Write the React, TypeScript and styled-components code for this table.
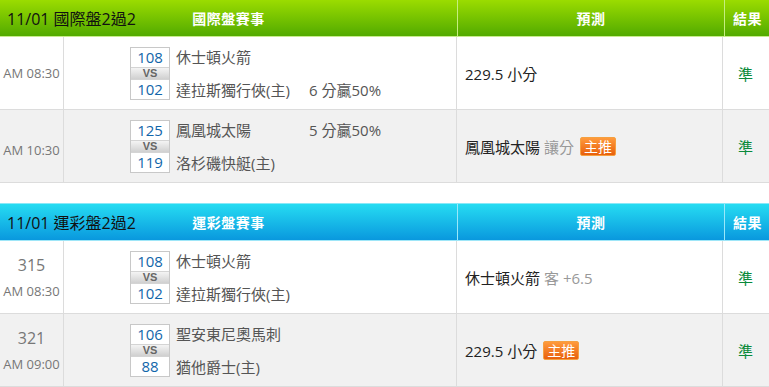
import React from 'react';
import styled, { createGlobalStyle } from 'styled-components';

const GlobalStyle = createGlobalStyle`
    body {
        margin: 0;
        background: #fff;
        font-family: 'Open Sans', 'Noto Sans CJK TC', sans-serif;
        overflow: hidden;
    }
`;

const Page = styled.div`
    width: 770px;
`;

const Section = styled.div`
    margin-bottom: 20px;
    &:last-child {
        margin-bottom: 0;
    }
`;

const HeaderRow = styled.div<{ color: 'green' | 'blue' }>`
    display: grid;
    grid-template-columns: 457px 1px 266px 1px 45px;
    height: 36px;
    background: ${(p) => (p.color === 'green' ? 'linear-gradient(#9bdc00, #52aa00)' : 'linear-gradient(#26dcf2, #0998de)')};
    border-top: ${(p) => (p.color === 'blue' ? '1px solid #8ae8f8' : 'none')};
    border-bottom: 1px solid ${(p) => (p.color === 'green' ? '#c8ec8c' : '#9ee6f8')};
    color: #fff;
`;

const HeaderSep = styled.div<{ color: 'green' | 'blue' }>`
    background: ${(p) => (p.color === 'green' ? '#c5ee80' : '#9ae8fa')};
`;

const HeaderMain = styled.div`
    display: grid;
    grid-template-columns: 1fr auto 1fr;
    align-items: center;
`;

const SectionTitle = styled.div`
    justify-self: start;
    padding-left: 7px;
    font-size: 16px;
    color: #111;
`;

const HeaderCell = styled.div`
    display: flex;
    align-items: center;
    justify-content: center;
    font-size: 14px;
    font-weight: bold;
    letter-spacing: 0.5px;
`;

const Row = styled.div<{ alt?: boolean }>`
    display: grid;
    grid-template-columns: 64px 393px 266px 45px;
    height: 72px;
    background: ${(p) => (p.alt ? '#f1f1f1' : '#fff')};
    border-bottom: 1px solid #dcdcdc;
`;

const Cell = styled.div`
    display: flex;
    align-items: center;
    border-right: 1px solid #dcdcdc;
`;

const TimeCell = styled(Cell)<{ shift?: boolean }>`
    flex-direction: column;
    justify-content: center;
    gap: 6px;
    color: #777;
    padding-top: ${(p) => (p.shift ? '8px' : '0')};
`;

const GameNo = styled.div`
    font-size: 16px;
`;

const Time = styled.div`
    font-size: 13px;
`;

const GameCell = styled(Cell)`
    padding-left: 66px;
    gap: 6px;
`;

const ScoreBox = styled.div`
    width: 38px;
    border: 1px solid #c8c8c8;
    background: #fff;
    display: flex;
    flex-direction: column;
`;

const Score = styled.div`
    height: 19px;
    line-height: 19px;
    text-align: center;
    font-size: 15px;
    color: #1166aa;
`;

const Vs = styled.div`
    height: 11px;
    line-height: 11px;
    text-align: center;
    font-family: 'Liberation Sans', sans-serif;
    font-size: 11px;
    font-weight: bold;
    color: #666;
    background: linear-gradient(#f4f4f4, #d0d0d0);
    border-top: 1px solid #d4d4d4;
    border-bottom: 1px solid #d4d4d4;
`;

const Teams = styled.div`
    display: flex;
    flex-direction: column;
    justify-content: space-between;
    height: 52px;
`;

const TeamLine = styled.div`
    display: flex;
    height: 19px;
    align-items: center;
    font-size: 15px;
    color: #555;
`;

const TeamName = styled.span`
    width: 133px;
    white-space: nowrap;
`;

const Handicap = styled.span`
    white-space: nowrap;
`;

const PredictCell = styled(Cell)`
    padding-left: 8px;
    font-size: 15px;
    color: #222;
    gap: 4px;
`;

const Muted = styled.span`
    color: #999;
`;

const Badge = styled.span`
    display: inline-block;
    margin-left: 2px;
    padding: 0 3px;
    height: 17px;
    line-height: 17px;
    font-size: 14px;
    color: #fff;
    background: linear-gradient(#ff9a3c, #e8600c);
    border: 1px solid #f5a040;
    border-radius: 2px;
`;

const ResultCell = styled(Cell)`
    justify-content: center;
    border-right: none;
    color: #0a8a3a;
    font-size: 15px;
`;

type Game = {
    no?: string;
    time: string;
    home: [string, string];
    away: [string, string];
    spreadOn?: 0 | 1;
    spread?: string;
    pick: React.ReactNode;
};

const sections: { color: 'green' | 'blue'; title: string; label: string; games: Game[] }[] = [
    {
        color: 'green',
        title: '11/01 國際盤2過2',
        label: '國際盤賽事',
        games: [
            { time: 'AM 08:30', home: ['108', '休士頓火箭'], away: ['102', '達拉斯獨行俠(主)'], spreadOn: 1, spread: '6 分贏50%', pick: <>229.5 小分</> },
            {
                time: 'AM 10:30',
                home: ['125', '鳳凰城太陽'],
                away: ['119', '洛杉磯快艇(主)'],
                spreadOn: 0,
                spread: '5 分贏50%',
                pick: (
                    <>
                        鳳凰城太陽 <Muted>讓分</Muted>
                        <Badge>主推</Badge>
                    </>
                ),
            },
        ],
    },
    {
        color: 'blue',
        title: '11/01 運彩盤2過2',
        label: '運彩盤賽事',
        games: [
            {
                no: '315',
                time: 'AM 08:30',
                home: ['108', '休士頓火箭'],
                away: ['102', '達拉斯獨行俠(主)'],
                pick: (
                    <>
                        休士頓火箭 <Muted>客 +6.5</Muted>
                    </>
                ),
            },
            {
                no: '321',
                time: 'AM 09:00',
                home: ['106', '聖安東尼奧馬刺'],
                away: ['88', '猶他爵士(主)'],
                pick: (
                    <>
                        229.5 小分<Badge>主推</Badge>
                    </>
                ),
            },
        ],
    },
];

const App = () => {
    return (
        <Page>
            <GlobalStyle />
            {sections.map((s) => (
                <Section key={s.label}>
                    <HeaderRow color={s.color}>
                        <HeaderMain>
                            <SectionTitle>{s.title}</SectionTitle>
                            <HeaderCell>{s.label}</HeaderCell>
                            <span />
                        </HeaderMain>
                        <HeaderSep color={s.color} />
                        <HeaderCell>預測</HeaderCell>
                        <HeaderSep color={s.color} />
                        <HeaderCell>結果</HeaderCell>
                    </HeaderRow>
                    {s.games.map((g, i) => (
                        <Row key={i} alt={i % 2 === 1}>
                            <TimeCell shift={!g.no && i === 1}>
                                {g.no && <GameNo>{g.no}</GameNo>}
                                <Time>{g.time}</Time>
                            </TimeCell>
                            <GameCell>
                                <ScoreBox>
                                    <Score>{g.home[0]}</Score>
                                    <Vs>VS</Vs>
                                    <Score>{g.away[0]}</Score>
                                </ScoreBox>
                                <Teams>
                                    <TeamLine>
                                        <TeamName>{g.home[1]}</TeamName>
                                        {g.spreadOn === 0 && <Handicap>{g.spread}</Handicap>}
                                    </TeamLine>
                                    <TeamLine>
                                        <TeamName>{g.away[1]}</TeamName>
                                        {g.spreadOn === 1 && <Handicap>{g.spread}</Handicap>}
                                    </TeamLine>
                                </Teams>
                            </GameCell>
                            <PredictCell>{g.pick}</PredictCell>
                            <ResultCell>準</ResultCell>
                        </Row>
                    ))}
                </Section>
            ))}
        </Page>
    );
};

export default App;
